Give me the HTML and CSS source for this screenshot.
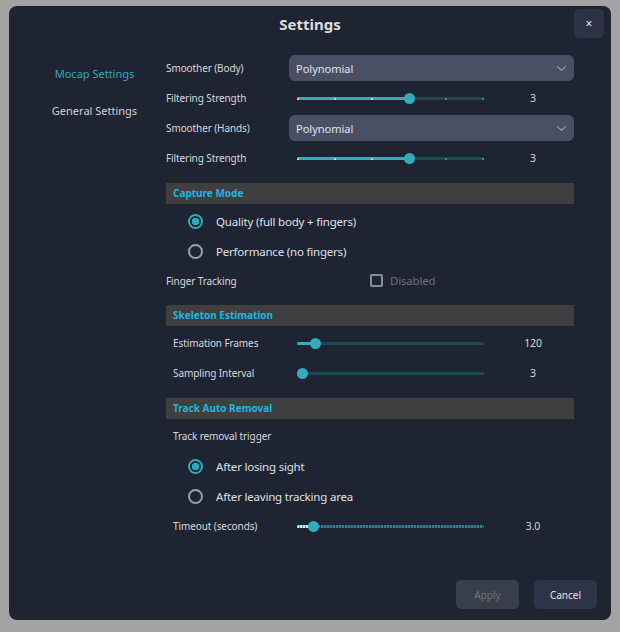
FILE: index.html
```html
<!DOCTYPE html>
<html>
<head>
    <link rel="stylesheet" href="styles.css">
</head>
<body>
    <div class="dialog">
        <header class="dialog-header">
            <span></span>
            <h1 class="dialog-title">Settings</h1>
            <button class="close-btn">×</button>
        </header>

        <main class="dialog-body">
            <nav class="side-nav">
                <div class="nav-item active">Mocap Settings</div>
                <div class="nav-item">General Settings</div>
            </nav>

            <div class="content">
                <div class="row">
                    <span class="label">Smoother (Body)</span>
                    <div class="select">Polynomial
                        <svg class="chevron" viewBox="0 0 12 8" width="11" height="7"><path d="M1 1.5 L6 6 L11 1.5" /></svg>
                    </div>
                </div>
                <div class="row">
                    <span class="label">Filtering Strength</span>
                    <div class="slider">
                        <div class="track"><div class="fill" style="width: 60%"></div></div>
                        <div class="ticks"><i></i><i></i><i></i><i></i><i class="off"></i><i class="off"></i></div>
                        <div class="thumb" style="left: 60%"></div>
                    </div>
                    <span class="value">3</span>
                </div>
                <div class="row">
                    <span class="label">Smoother (Hands)</span>
                    <div class="select">Polynomial
                        <svg class="chevron" viewBox="0 0 12 8" width="11" height="7"><path d="M1 1.5 L6 6 L11 1.5" /></svg>
                    </div>
                </div>
                <div class="row">
                    <span class="label">Filtering Strength</span>
                    <div class="slider">
                        <div class="track"><div class="fill" style="width: 60%"></div></div>
                        <div class="ticks"><i></i><i></i><i></i><i></i><i class="off"></i><i class="off"></i></div>
                        <div class="thumb" style="left: 60%"></div>
                    </div>
                    <span class="value">3</span>
                </div>

                <div class="section-heading">Capture Mode</div>
                <div class="radio-row">
                    <span class="radio checked"></span>
                    <span>Quality (full body + fingers)</span>
                </div>
                <div class="radio-row">
                    <span class="radio"></span>
                    <span>Performance (no fingers)</span>
                </div>
                <div class="row short">
                    <span class="label">Finger Tracking</span>
                    <div class="checkbox-wrap">
                        <span class="checkbox"></span>
                        <span class="disabled-text">Disabled</span>
                    </div>
                </div>

                <div class="section-heading">Skeleton Estimation</div>
                <div class="row indent">
                    <span class="label">Estimation Frames</span>
                    <div class="slider">
                        <div class="track"><div class="fill" style="width: 10%"></div></div>
                        <div class="thumb" style="left: 10%"></div>
                    </div>
                    <span class="value">120</span>
                </div>
                <div class="row indent">
                    <span class="label">Sampling Interval</span>
                    <div class="slider">
                        <div class="track"><div class="fill" style="width: 3%"></div></div>
                        <div class="thumb" style="left: 3%"></div>
                    </div>
                    <span class="value">3</span>
                </div>

                <div class="section-heading">Track Auto Removal</div>
                <div class="row indent">
                    <span class="label">Track removal trigger</span>
                </div>
                <div class="radio-row">
                    <span class="radio checked"></span>
                    <span>After losing sight</span>
                </div>
                <div class="radio-row">
                    <span class="radio"></span>
                    <span>After leaving tracking area</span>
                </div>
                <div class="row indent">
                    <span class="label">Timeout (seconds)</span>
                    <div class="slider dotted">
                        <div class="track"><div class="fill" style="width: 8.6%"></div></div>
                        <div class="thumb" style="left: 8.6%"></div>
                    </div>
                    <span class="value">3.0</span>
                </div>
            </div>
        </main>

        <footer class="dialog-footer">
            <button class="btn btn-disabled">Apply</button>
            <button class="btn btn-cancel">Cancel</button>
        </footer>
    </div>
</body>
</html>
```

FILE: styles.css
```css
body {
    margin: 0;
    padding: 6px 9px 12px 9px;
    background: #a3a3a3;
    font-family: "Noto Sans", "Open Sans", sans-serif;
    color: #d6d8dc;
}

.dialog {
    width: 602px;
    height: 614px;
    background: #1f2433;
    border-radius: 8px;
    display: flex;
    flex-direction: column;
    box-sizing: border-box;
}

.dialog-header {
    height: 40px;
    display: grid;
    grid-template-columns: 1fr auto 1fr;
}
.dialog-title {
    margin: 7px 0 0 0;
    align-self: start;
    line-height: 22px;
    font-size: 15px;
    font-weight: bold;
    color: #dcdcdc;
}
.close-btn {
    justify-self: end;
    align-self: start;
    width: 30px;
    height: 29px;
    margin: 3px 7px 0 0;
    border: none;
    border-radius: 5px;
    background: #2c3347;
    color: #e8e8e8;
    font-family: inherit;
    font-size: 12px;
    padding: 0;
}

.dialog-body {
    display: grid;
    grid-template-columns: 131px 408px;
    column-gap: 6px;
    padding: 7px 37px 0 20px;
}

.side-nav {
    display: flex;
    flex-direction: column;
    align-items: center;
    gap: 17px;
    padding-top: 11px;
}
.nav-item {
    height: 20px;
    line-height: 20px;
    font-size: 11px;
    color: #d0d2d6;
}
.nav-item.active {
    color: #3aa6b7;
}

.content {
    display: flex;
    flex-direction: column;
}

.row {
    height: 30px;
    display: grid;
    grid-template-columns: 123px 203px 1fr;
    align-items: center;
    font-size: 10px;
    letter-spacing: -0.1px;
}
.row.short {
    height: 29px;
}
.row.indent .label {
    padding-left: 7px;
}
.label {
    white-space: nowrap;
}

.select {
    grid-column: 2 / 4;
    height: 26px;
    background: #4a5064;
    border-radius: 6px;
    display: flex;
    align-items: center;
    justify-content: space-between;
    padding: 0 7px 0 7px;
    font-size: 11px;
    letter-spacing: 0;
    color: #e2e4e8;
}
.chevron {
    fill: none;
    stroke: #9ca0ac;
    stroke-width: 1.2;
}

.slider {
    position: relative;
    height: 12px;
    margin: 0 8px;
}
.track {
    position: absolute;
    left: 0;
    right: 0;
    top: 5px;
    height: 3px;
    border-radius: 2px;
    background: #1d4955;
    overflow: hidden;
}
.fill {
    height: 100%;
    background: #35acbc;
}
.ticks {
    position: absolute;
    left: 0;
    right: 0;
    top: 5px;
    height: 3px;
    display: flex;
    justify-content: space-between;
}
.ticks i {
    width: 2px;
    height: 2px;
    margin-top: 0.5px;
    background: #a6dce4;
}
.ticks i.off {
    background: #3b8c99;
}
.thumb {
    position: absolute;
    top: 1px;
    width: 11px;
    height: 11px;
    margin-left: -5.5px;
    border-radius: 50%;
    background: #35acbc;
}
.slider.dotted .track {
    background: repeating-linear-gradient(90deg, #2a8593 0 2px, #1d4955 2px 3px);
}
.slider.dotted .fill {
    background: repeating-linear-gradient(90deg, #c6eef2 0 2px, #35acbc 2px 3px);
}

.value {
    text-align: center;
    font-size: 10.5px;
}

.section-heading {
    height: 21px;
    line-height: 21px;
    margin: 10px 0 2px 0;
    padding-left: 7px;
    background: #3f3f3f;
    color: #1eb6e2;
    font-size: 10px;
    font-weight: bold;
}

.radio-row {
    height: 30px;
    display: flex;
    align-items: center;
    gap: 13px;
    padding-left: 22px;
    font-size: 11.5px;
    letter-spacing: -0.2px;
    color: #dfe1e4;
}
.radio {
    width: 15px;
    height: 15px;
    box-sizing: border-box;
    border: 2px solid #9ba0a8;
    border-radius: 50%;
}
.radio.checked {
    border-color: #30a9b9;
    background: radial-gradient(circle, #30a9b9 0 3.5px, transparent 4px);
}

.checkbox-wrap {
    display: flex;
    align-items: center;
    gap: 7px;
    padding-left: 81px;
}
.checkbox {
    width: 13px;
    height: 13px;
    box-sizing: border-box;
    border: 2px solid #8a8e96;
    border-radius: 2px;
}
.disabled-text {
    font-size: 11.5px;
    letter-spacing: -0.2px;
    color: #6b7079;
}

.dialog-footer {
    margin-top: auto;
    display: flex;
    justify-content: flex-end;
    gap: 15px;
    padding: 0 14px 11px 0;
}
.btn {
    width: 63px;
    height: 29px;
    border: none;
    border-radius: 5px;
    font-family: inherit;
    font-size: 10px;
}
.btn-disabled {
    background: #393e4b;
    color: #6e7381;
}
.btn-cancel {
    background: #2d3447;
    color: #e4e6ea;
}
```
